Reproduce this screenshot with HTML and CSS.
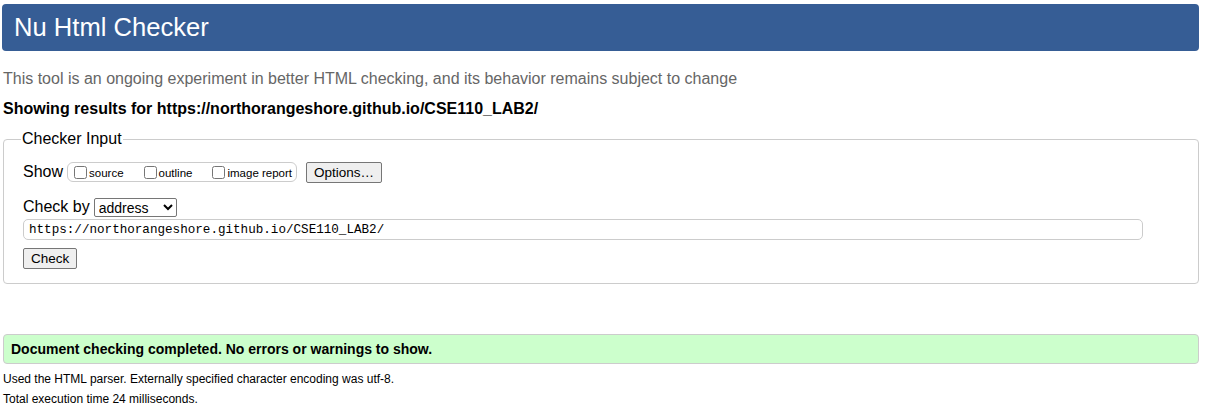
FILE: index.html
```html
<!DOCTYPE html>
<html>
<head>
<meta charset="utf-8">
<link rel="stylesheet" href="styles.css">
</head>
<body>
<h1 class="hdr">Nu Html Checker</h1>
<p class="intro">This tool is an ongoing experiment in better HTML checking, and its behavior remains subject to change</p>
<p class="showing">Showing results for https://northorangeshore.github.io/CSE110_LAB2/</p>
<fieldset class="input">
  <legend>Checker Input</legend>
  <div class="row show">
    <span class="lbl">Show</span>
    <span class="opts">
      <label class="opt"><input type="checkbox"><span>source</span></label>
      <label class="opt"><input type="checkbox"><span>outline</span></label>
      <label class="opt"><input type="checkbox"><span>image report</span></label>
    </span>
    <button class="btn opts-btn">Options…</button>
  </div>
  <div class="row by">
    <span class="lbl">Check by</span>
    <select class="sel"><option>address</option></select>
  </div>
  <input class="url" type="text" value="https://northorangeshore.github.io/CSE110_LAB2/">
  <button class="btn check">Check</button>
</fieldset>
<div class="success">Document checking completed. No errors or warnings to show.</div>
<p class="meta">Used the HTML parser. Externally specified character encoding was utf-8.</p>
<p class="meta">Total execution time 24 milliseconds.</p>
</body>
</html>
```
FILE: styles.css
```css
html, body { margin: 0; padding: 0; background: #fff; }
body {
  font-family: "Liberation Sans", Arial, sans-serif;
  color: #000;
  padding: 4px 24px 0 3px;
}
.hdr {
  margin: 0 0 0 -1px;
  background: #365d95;
  color: #fff;
  font-weight: normal;
  font-size: 25.6px;
  line-height: 47px;
  height: 47px;
  padding: 0 12px;
  border-radius: 4px;
}
.intro {
  margin: 18px 0 0 0;
  font-size: 16px;
  line-height: 19px;
  color: #666;
}
.showing {
  margin: 11px 0 0 0;
  font-size: 16px;
  line-height: 19px;
  font-weight: bold;
}
.input {
  margin: 12px 0 0 0;
  border: 1px solid #ccc;
  border-radius: 4px;
  padding: 6px 55px 14px 19px;
}
.input legend {
  font-size: 16px;
  padding: 0 1px;
  margin-left: -2px;
}
.row { display: flex; align-items: center; }
.lbl { font-size: 16px; }
.show { margin-top: 6px; height: 24px; }
.opts {
  display: inline-flex;
  align-items: center;
  margin-left: 4px;
  border: 1px solid #ccc;
  border-radius: 6px;
  height: 18px;
  padding: 0 4px 0 6px;
}
.opt {
  display: inline-flex;
  align-items: center;
  font-size: 11.5px;
  margin-right: 20px;
}
.opt span { position: relative; top: 1px; }
.opt:last-child { margin-right: 0; }
.opt input {
  margin: 0 2px 0 0;
  width: 13px; height: 13px;
}
.btn {
  font-family: "Liberation Sans", Arial, sans-serif;
  font-size: 13.5px;
  background: #efefef;
  border: 1px solid #767676;
  border-radius: 2px;
  padding: 1px 7px;
  height: 21px;
  color: #000;
}
.opts-btn { margin-left: 9px; }
.by { margin-top: 12px; height: 22px; }
.sel {
  margin-left: 4px;
  font-family: "Liberation Sans", Arial, sans-serif;
  font-size: 14px;
  width: 83px;
  height: 19px;
  border: 1px solid #767676;
  border-radius: 2px;
  padding: 0;
  background: #fff;
}
.url {
  display: block;
  box-sizing: border-box;
  width: 100%;
  height: 21px;
  margin-top: 1px;
  border: 1px solid #ccc;
  border-radius: 5px;
  padding: 0 5px;
  font-family: "Liberation Mono", "DejaVu Sans Mono", monospace;
  font-size: 12.6px;
  color: #000;
}
.check { display: block; margin-top: 8px; }
.success {
  margin-top: 50px;
  background: #ccffcc;
  border: 1px solid #ccc;
  border-radius: 4px;
  font-size: 14px;
  font-weight: bold;
  line-height: 28px;
  padding: 0 7px;
}
.meta {
  margin: 8px 0 0 0;
  font-size: 12px;
  line-height: 14px;
}
.meta + .meta { margin-top: 6px; }
```
